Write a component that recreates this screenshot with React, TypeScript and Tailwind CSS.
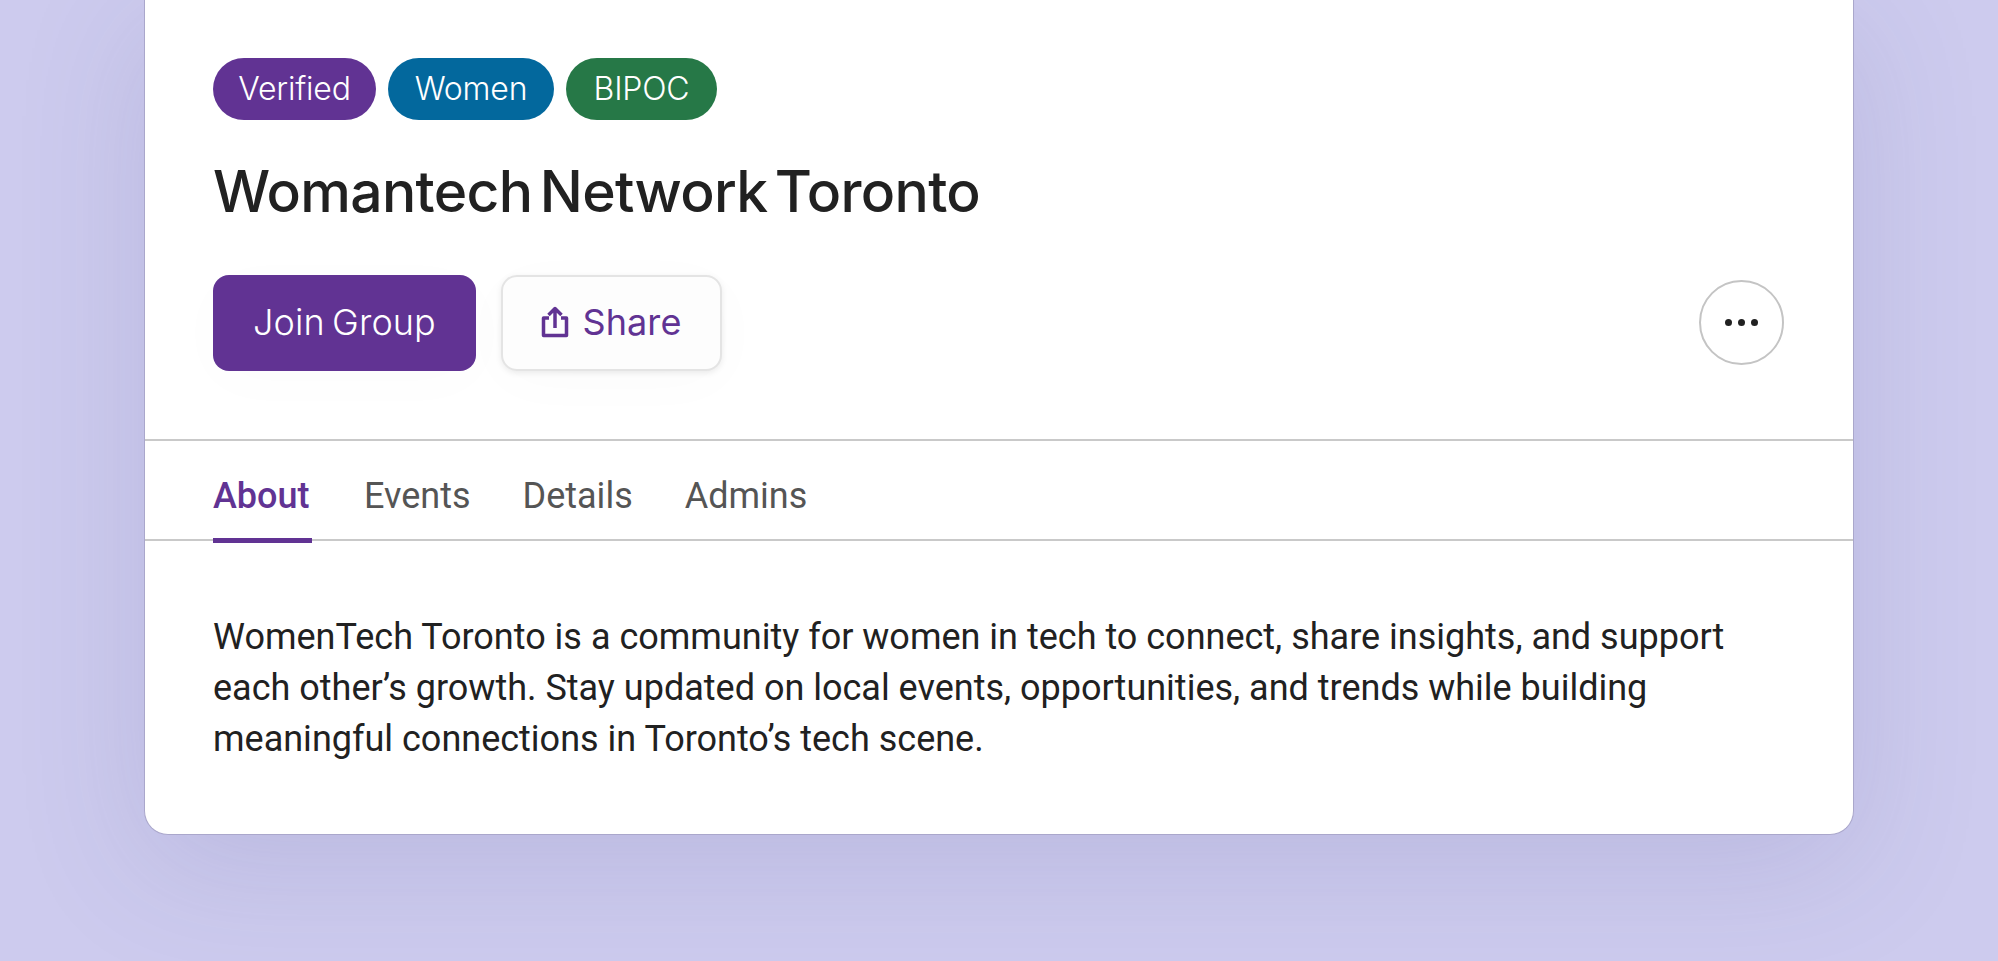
export default function App() {
  const tabs = ["Events", "Details", "Admins"];

  return (
    <div className="h-[961px] overflow-hidden bg-[#cdcbee] font-['Roboto',sans-serif]">
      <div className="ml-[144px] h-[835px] w-[1710px] rounded-b-[24px] border-x border-b border-[#aaa7cb] bg-white pt-[58px] shadow-[0_30px_130px_rgba(90,85,150,0.16)]">
        <div className="px-[68px]">
          <div className="flex gap-[12px] font-['Inter',sans-serif] text-[32px] leading-[62px] font-light tracking-[-0.2px] text-white">
            <span className="flex h-[62px] w-[163px] items-center justify-center rounded-[31px] bg-[#613393]">Verified</span>
            <span className="flex h-[62px] w-[166px] items-center justify-center rounded-[31px] bg-[#03689d]">Women</span>
            <span className="flex h-[62px] w-[151px] items-center justify-center rounded-[31px] bg-[#267847]">BIPOC</span>
          </div>
          <h1 className="mt-[39px] font-['Inter',sans-serif] text-[57px] leading-[66px] font-medium tracking-[-0.7px] [word-spacing:-7px] text-[#212121]">
            Womantech Network Toronto
          </h1>
          <div className="mt-[50px] flex items-center">
            <button className="h-[96px] w-[263px] rounded-[16px] bg-[#613393] pb-[2px] font-['Inter',sans-serif] text-[36px] font-light tracking-[0.1px] [word-spacing:-3px] text-white shadow-[0_10px_60px_rgba(0,0,0,0.015)]">
              Join Group
            </button>
            <button className="ml-[25px] flex h-[96px] w-[221px] items-center justify-center gap-[13px] rounded-[16px] border-2 border-[#e4e4e4] bg-[#fdfdfd] pb-[2px] font-['Inter',sans-serif] text-[36px] font-normal tracking-[0.1px] text-[#613393] shadow-[0_2px_6px_rgba(0,0,0,0.08),0_10px_60px_rgba(0,0,0,0.02)]">
              <svg width="28" height="32" viewBox="0 0 28 32" fill="none" stroke="#613393" strokeWidth="3.5" strokeLinejoin="round">
                <path d="M8 12H2.5v17.5h23V12H20" />
                <path d="M14 22V3M7.5 9 14 2.5 20.5 9" />
              </svg>
              Share
            </button>
            <button className="mr-[1px] mb-[2px] ml-auto flex h-[85px] w-[85px] items-center justify-center gap-[6px] rounded-full border-2 border-[#c4c4c4] bg-white">
              <span className="h-[7px] w-[7px] rounded-full bg-[#212121]" />
              <span className="h-[7px] w-[7px] rounded-full bg-[#212121]" />
              <span className="h-[7px] w-[7px] rounded-full bg-[#212121]" />
            </button>
          </div>
        </div>

        <div className="mt-[68px] flex h-[102px] gap-[52px] border-y-2 border-[#c9c9c9] px-[68px] pt-[12px] text-[36px] text-[#555555]">
          <div className="relative flex w-[99px] items-center font-medium text-[#613393]">
            About
            <span className="absolute right-0 bottom-[-4px] left-0 h-[5px] bg-[#613393]" />
          </div>
          {tabs.map((tab) => (
            <div key={tab} className="flex items-center">{tab}</div>
          ))}
        </div>

        <p className="mt-[71px] px-[68px] text-[36px] leading-[51px] text-[#212121]">
          WomenTech Toronto is a community for women in tech to connect, share insights, and support each other’s growth. Stay updated on local events, opportunities, and trends while building meaningful connections in Toronto’s tech scene.
        </p>
      </div>
    </div>
  );
}
